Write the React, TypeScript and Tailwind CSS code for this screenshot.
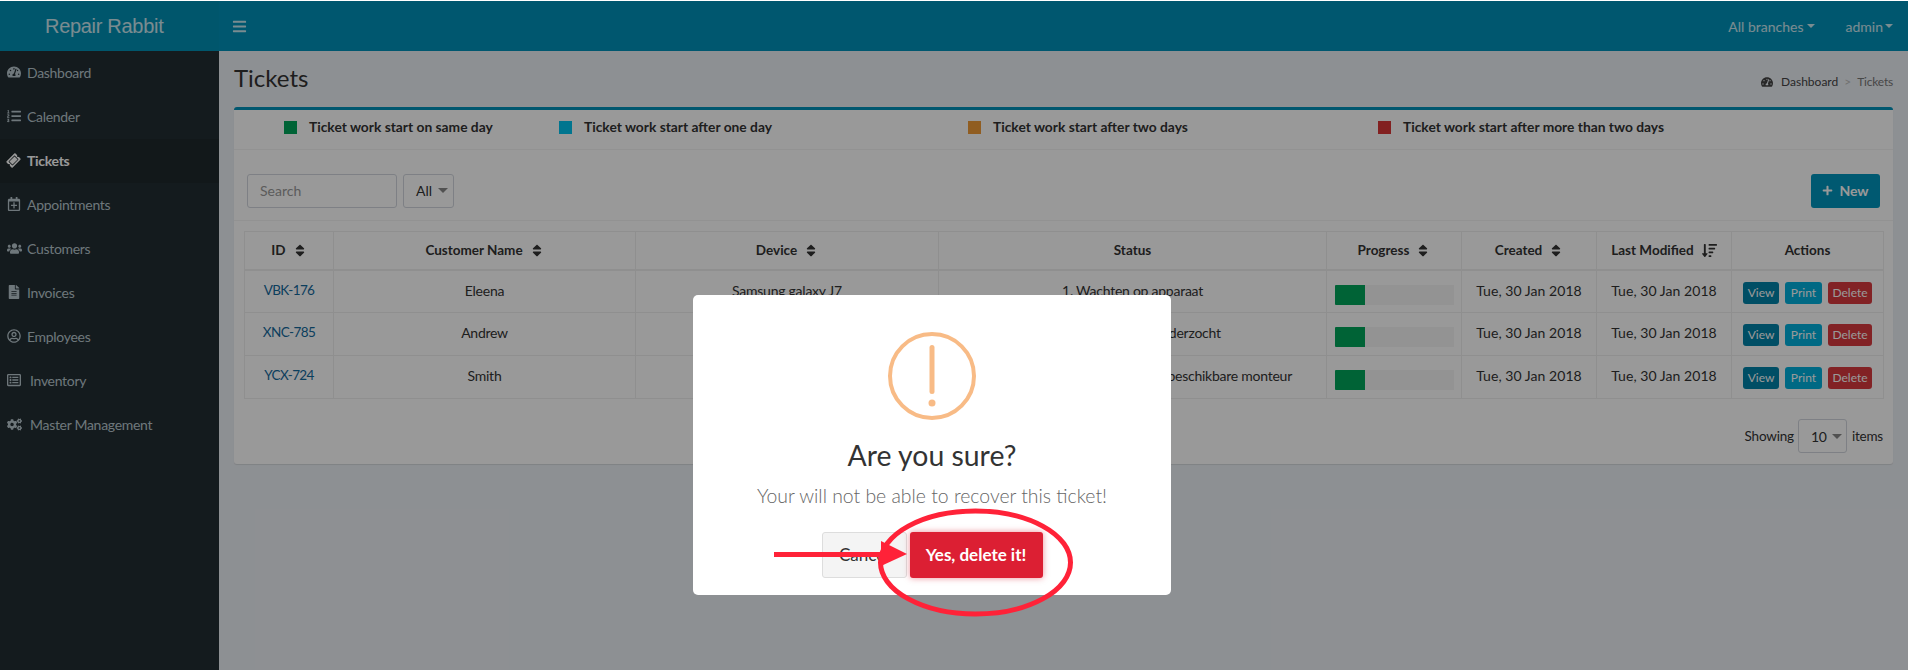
import React from "react";
import {
  FaTachometerAlt, FaListOl, FaTicketAlt, FaRegCalendarPlus, FaUsers, FaFileAlt,
  FaRegUserCircle, FaRegListAlt, FaCogs, FaBars, FaSort, FaSortAmountDown, FaPlus,
} from "react-icons/fa";

const nav = [
  { label: "Dashboard", Icon: FaTachometerAlt, size: "w-[14px] h-[14px]", gap: "ml-[6px]" },
  { label: "Calender", Icon: FaListOl, size: "w-[14px] h-[14px]", gap: "ml-[6px]" },
  { label: "Tickets", Icon: FaTicketAlt, size: "w-[13px] h-[13px] -rotate-45", gap: "ml-[7px]", active: true },
  { label: "Appointments", Icon: FaRegCalendarPlus, size: "w-[14px] h-[14px]", gap: "ml-[6px]" },
  { label: "Customers", Icon: FaUsers, size: "w-[15px] h-[15px]", gap: "ml-[5px]" },
  { label: "Invoices", Icon: FaFileAlt, size: "w-[14px] h-[14px]", gap: "ml-[6px]" },
  { label: "Employees", Icon: FaRegUserCircle, size: "w-[14px] h-[14px]", gap: "ml-[6px]" },
  { label: "Inventory", Icon: FaRegListAlt, size: "w-[14px] h-[14px]", gap: "ml-[9px]" },
  { label: "Master Management", Icon: FaCogs, size: "w-[15px] h-[15px]", gap: "ml-[8px]" },
];

const legend = [
  { text: "Ticket work start on same day", color: "bg-[#00a65a]", w: "w-[275px]" },
  { text: "Ticket work start after one day", color: "bg-[#00c4ee]", w: "w-[409px]" },
  { text: "Ticket work start after two days", color: "bg-[#f09b38]", w: "w-[410px]" },
  { text: "Ticket work start after more than two days", color: "bg-[#d93636]", w: "w-auto" },
];

const rows = [
  { id: "VBK-176", name: "Eleena", device: "Samsung galaxy J7", status: "1. Wachten op apparaat" },
  { id: "XNC-785", name: "Andrew", device: "iPhone 6", status: "2. Apparaat wordt onderzocht" },
  { id: "YCX-724", name: "Smith", device: "Samsung galaxy S7", status: "3. Wachten op de eerstvolgende beschikbare monteur" },
];

const headers: { label: string; icon?: "sort" | "desc" }[] = [
  { label: "ID", icon: "sort" },
  { label: "Customer Name", icon: "sort" },
  { label: "Device", icon: "sort" },
  { label: "Status" },
  { label: "Progress", icon: "sort" },
  { label: "Created", icon: "sort" },
  { label: "Last Modified", icon: "desc" },
  { label: "Actions" },
];

const Caret = ({ className = "" }: { className?: string }) => (
  <span className={`inline-block w-0 h-0 border-x-[4px] border-x-transparent border-t-[4px] ${className}`} />
);

const SelectCaret = ({ className = "" }: { className?: string }) => (
  <span className={`inline-block w-0 h-0 border-x-[5px] border-x-transparent border-t-[5px] ${className}`} />
);

export default function App() {
  return (
    <div className="relative h-[670px] w-[1908px] overflow-hidden bg-[#ecf0f5] text-[14px] text-[#333] font-['Lato','Noto_Sans',sans-serif]">
      <div className="h-px bg-[#ffffff]" />
      <div className="flex h-[669px]">
        <aside className="w-[219px] shrink-0 bg-[#222d32]">
          <div className="flex h-[50px] items-center pl-[45px] bg-[#008fb5] text-[20px] tracking-[-0.3px] text-white/80 font-['Liberation_Sans',sans-serif]">
            Repair Rabbit
          </div>
          <nav>
            {nav.map(({ label, Icon, size, gap, active }) => (
              <div
                key={label}
                className={`flex h-[44px] items-center pl-[7px] pb-[2px] tracking-[-0.3px] ${active ? "bg-[#1e282c] text-white font-bold" : "text-[#b8c7ce]"}`}
              >
                <Icon className={`${size} shrink-0`} />
                <span className={gap}>{label}</span>
              </div>
            ))}
          </nav>
        </aside>

        <main className="flex-1 min-w-0">
          <header className="flex h-[50px] items-center bg-[#0092ba] pl-[13px] pr-[15px] text-white/80">
            <FaBars className="w-[15px] h-[15px]" />
            <div className="ml-auto flex items-center">
              <span>All branches</span>
              <Caret className="ml-[3px] border-t-white/80" />
              <span className="ml-[31px]">admin</span>
              <Caret className="ml-[2px] border-t-white/80" />
            </div>
          </header>

          <div className="px-[15px]">
            <div className="flex h-[56px] items-center justify-between">
              <h1 className="text-[24px] leading-none text-[#333] -mt-[2px]">Tickets</h1>
              <div className="flex items-center text-[12px] mt-[6px]">
                <FaTachometerAlt className="w-[12px] h-[12px] text-[#444]" />
                <span className="ml-[8px] text-[#444]">Dashboard</span>
                <span className="mx-[6px] text-[#bbb]">&gt;</span>
                <span className="text-[#777] tracking-[-0.2px]">Tickets</span>
              </div>
            </div>

            <section className="h-[357px] rounded-[3px] border-t-[3px] border-[#0092ba] bg-white shadow-[0_1px_1px_rgba(0,0,0,0.1)]">
              <div className="flex h-[40px] items-center pl-[50px] pb-[4px] border-b border-[#f4f4f4]">
                {legend.map((l) => (
                  <div key={l.text} className={`flex items-center ${l.w}`}>
                    <span className={`w-[13px] h-[13px] ${l.color}`} />
                    <b className="ml-[12px] text-[13.8px]">{l.text}</b>
                  </div>
                ))}
              </div>

              <div className="flex h-[71px] items-center pl-[13px] pr-[13px] border-b border-[#f4f4f4] pt-[11px]">
                <div className="flex h-[34px] w-[150px] items-center rounded-[3px] border border-[#d2d6de] pl-[12px] text-[#999]">Search</div>
                <div className="ml-[6px] flex h-[34px] w-[51px] items-center rounded-[3px] border border-[#d2d6de] pl-[12px]">
                  All
                  <SelectCaret className="ml-[6px] border-t-[#888]" />
                </div>
                <button className="ml-auto flex h-[34px] w-[69px] items-center justify-center rounded-[3px] bg-[#0094bc] text-white font-bold">
                  <FaPlus className="w-[11px] h-[11px] mr-[6px]" />
                  New
                </button>
              </div>

              <div className="px-[10px] pt-[10px]">
                <table className="w-[1639px] table-fixed border-collapse text-center">
                  <colgroup>
                    <col className="w-[89px]" />
                    <col className="w-[302px]" />
                    <col className="w-[303px]" />
                    <col className="w-[388px]" />
                    <col className="w-[135px]" />
                    <col className="w-[135px]" />
                    <col className="w-[135px]" />
                    <col className="w-[152px]" />
                  </colgroup>
                  <thead>
                    <tr className="h-[38px]">
                      {headers.map((h) => (
                        <th key={h.label} className="border border-b-2 border-[#eeeeee] p-0 text-[13.5px] font-bold">
                          <span className="inline-flex items-center justify-center">
                            {h.label}
                            {h.icon === "sort" && <FaSort className="ml-[7px] w-[14px] h-[15px] text-[#333]" />}
                            {h.icon === "desc" && <FaSortAmountDown className="ml-[8px] w-[15px] h-[15px] text-[#333]" />}
                          </span>
                        </th>
                      ))}
                    </tr>
                  </thead>
                  <tbody>
                    {rows.map((r) => (
                      <tr key={r.id} className="h-[43px]">
                        <td className="border border-[#eeeeee] align-top pt-[9px] text-[#14699c] text-[13.5px] tracking-[-0.6px]">{r.id}</td>
                        <td className="border border-[#eeeeee] align-top pt-[9px] tracking-[-0.25px]">{r.name}</td>
                        <td className="border border-[#eeeeee] align-top pt-[9px] tracking-[-0.25px]">{r.device}</td>
                        <td className="border border-[#eeeeee] align-top pt-[9px] whitespace-nowrap tracking-[-0.25px]">{r.status}</td>
                        <td className="border border-[#eeeeee] align-top pt-[14px] pl-[8px]">
                          <div className="h-[20px] w-[119px] bg-[#f5f5f5]">
                            <div className="h-full w-[30px] rounded-l-[1px] bg-[#00a65a]" />
                          </div>
                        </td>
                        <td className="border border-[#eeeeee] align-top pt-[9px] tracking-[0.05px]">Tue, 30 Jan 2018</td>
                        <td className="border border-[#eeeeee] align-top pt-[9px] tracking-[0.05px]">Tue, 30 Jan 2018</td>
                        <td className="border border-[#eeeeee] align-top pt-[11px] pl-[11px]">
                          <div className="flex gap-[6px] text-[12px] text-white leading-[22px]">
                            <span className="w-[36px] h-[22px] rounded-[3px] bg-[#0082a8]">View</span>
                            <span className="w-[37px] h-[22px] rounded-[3px] bg-[#00b0dc]">Print</span>
                            <span className="w-[44px] h-[22px] rounded-[3px] bg-[#d93a3f]">Delete</span>
                          </div>
                        </td>
                      </tr>
                    ))}
                  </tbody>
                </table>
                <div className="mt-[20px] flex items-center justify-end text-[13.5px] tracking-[-0.2px]">
                  <span>Showing</span>
                  <div className="ml-[4px] flex h-[34px] w-[49px] items-center rounded-[3px] border border-[#d2d6de] pl-[12px] text-[14px]">
                    10
                    <SelectCaret className="ml-[5px] border-t-[#888]" />
                  </div>
                  <span className="ml-[5px]">items</span>
                </div>
              </div>
            </section>
          </div>
        </main>
      </div>

      {/* dimming layer */}
      <div className="absolute inset-x-0 top-px bottom-0 bg-black/40" />

      {/* dialog */}
      <div className="absolute left-[693px] top-[295px] flex h-[300px] w-[478px] flex-col items-center rounded-[5px] bg-white">
        <svg width="90" height="90" viewBox="0 0 90 90" className="mt-[36px]">
          <circle cx="45" cy="45" r="42" fill="none" stroke="#f8bb86" strokeWidth="4" />
          <rect x="42.5" y="14" width="5" height="49" rx="2.5" fill="#f8bb86" />
          <circle cx="45" cy="72" r="3.5" fill="#f8bb86" />
        </svg>
        <h2 className="mt-[14px] text-[28.4px] leading-[40px] text-[#333]">Are you sure?</h2>
        <p className="mt-[7px] text-[19.4px] leading-[28px] font-light text-[#666]">Your will not be able to recover this ticket!</p>
        <div className="mt-[22px] flex gap-[3px]">
          <button className="h-[46px] w-[85px] rounded-[3px] border border-[#ddd] bg-[#f4f4f4] text-[17px] text-[#333]">Cancel</button>
          <button className="h-[46px] w-[133px] rounded-[3px] bg-[#dc1f33] text-[17px] font-bold text-white shadow-[0_0_6px_rgba(220,31,51,0.5)]">Yes, delete it!</button>
        </div>
      </div>

      {/* hand-drawn annotation */}
      <svg className="absolute left-[760px] top-[500px]" width="330" height="125" viewBox="760 500 330 125">
        <ellipse cx="975.5" cy="562.5" rx="95" ry="51.5" fill="none" stroke="#ff2238" strokeWidth="5" />
        <rect x="774" y="552" width="112" height="5" fill="#ff2238" />
        <polygon points="881,541 907,554 881,566" fill="#ff2238" />
      </svg>
    </div>
  );
}
